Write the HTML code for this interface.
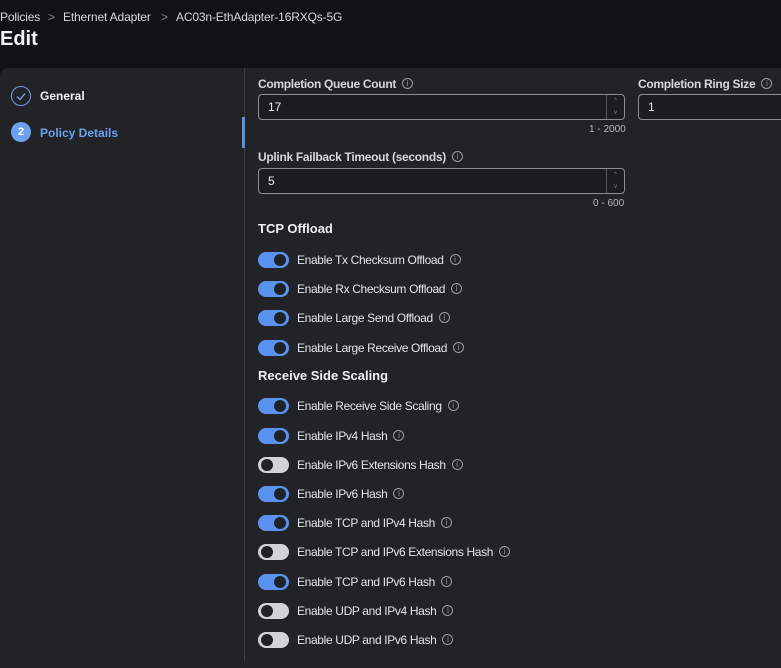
<!DOCTYPE html>
<html><head><style>
*{margin:0;padding:0;box-sizing:border-box}
body{width:781px;height:661px;background:#111214;font-family:"Liberation Sans",sans-serif;color:#e8e9eb;position:relative;overflow:hidden;font-size:12px}
.a{position:absolute;white-space:nowrap}
.crumb{top:10px;font-size:12px;color:#d8d9db;letter-spacing:-0.15px}
.panel{position:absolute;left:0;top:68px;width:781px;height:600px;background:#212327;border-radius:8px 0 0 0}
.lbl{font-size:12px;font-weight:bold;color:#d6d7d9;letter-spacing:-0.3px}
.i{display:inline-block;width:11px;height:11px;border:1px solid #9a9ca0;border-radius:50%;font-size:8px;line-height:9px;text-align:center;color:#9a9ca0;vertical-align:top;margin-top:1px;margin-left:6px;font-weight:normal;letter-spacing:0}
.inp{position:absolute;height:26px;border:1px solid #8d8f93;border-radius:4px;background:#1b1d20;padding-left:9px;line-height:24px;font-size:12px;color:#eee}
.spin{position:absolute;right:0;top:0;width:18px;height:24px;border-left:1px solid #55575b;font-size:6px;color:#888;text-align:center;line-height:12px}
.range{font-size:10px;color:#b8b9bc}
.h{font-size:13px;font-weight:bold;color:#eef0f2}
.tg{position:absolute;left:258px;width:31px;height:16px;border-radius:8px}
.on{background:#5a93ef}.off{background:#d2d3d5}
.tg:after{content:"";position:absolute;top:2px;width:12px;height:12px;border-radius:50%;background:#1f2226}
.on:after{right:3px}.off:after{left:3px}
.tl{left:297px;font-size:12px;color:#e4e5e7;letter-spacing:-0.35px}
</style></head><body>
<div class="a crumb" style="left:0">Policies</div>
<div class="a crumb" style="left:48px;color:#888">&gt;</div>
<div class="a crumb" style="left:63px">Ethernet Adapter</div>
<div class="a crumb" style="left:161px;color:#888">&gt;</div>
<div class="a crumb" style="left:176px">AC03n-EthAdapter-16RXQs-5G</div>
<div class="a" style="left:0;top:28px;font-size:20px;font-weight:bold;color:#f2f3f5">Edit</div>
<div class="panel"></div>
<div class="a" style="left:244px;top:68px;width:1px;height:593px;background:#3a3c40"></div>
<div class="a" style="left:242px;top:117px;width:3px;height:31px;background:#5a8ee0"></div>
<div class="a" style="left:11px;top:86px;width:20px;height:20px;border:1.5px solid #6d9de8;border-radius:50%"></div>
<svg class="a" style="left:11px;top:86px" width="20" height="20"><path d="M6 10.5l3 3 5-6" fill="none" stroke="#6d9de8" stroke-width="1.4"/></svg>
<div class="a" style="left:40px;top:89px;font-weight:bold;font-size:12px;color:#f0f0f2">General</div>
<div class="a" style="left:11px;top:122px;width:20px;height:20px;border-radius:50%;background:#6aa1f0;color:#fff;font-weight:bold;text-align:center;line-height:20px;font-size:11px">2</div>
<div class="a" style="left:40px;top:126px;font-weight:bold;font-size:12px;color:#6aa1f0">Policy Details</div>

<div class="a lbl" style="left:258px;top:77px">Completion Queue Count<span class="i">i</span></div>
<div class="inp" style="left:258px;top:94px;width:367px">17<div class="spin">^<br>v</div></div>
<div class="a range" style="left:589px;top:124px">1 - 2000</div>
<div class="a lbl" style="left:638px;top:77px">Completion Ring Size<span class="i">i</span></div>
<div class="inp" style="left:638px;top:94px;width:160px">1</div>
<div class="a lbl" style="left:258px;top:150px">Uplink Failback Timeout (seconds)<span class="i">i</span></div>
<div class="inp" style="left:258px;top:168px;width:367px">5<div class="spin">^<br>v</div></div>
<div class="a range" style="left:593px;top:198px">0 - 600</div>
<div class="a h" style="left:258px;top:221px">TCP Offload</div>
<div class="a h" style="left:258px;top:368px">Receive Side Scaling</div>

<div class="tg on" style="top:252px"></div><div class="a tl" style="top:253px">Enable Tx Checksum Offload<span class="i">i</span></div>
<div class="tg on" style="top:281px"></div><div class="a tl" style="top:282px">Enable Rx Checksum Offload<span class="i">i</span></div>
<div class="tg on" style="top:310px"></div><div class="a tl" style="top:311px">Enable Large Send Offload<span class="i">i</span></div>
<div class="tg on" style="top:340px"></div><div class="a tl" style="top:341px">Enable Large Receive Offload<span class="i">i</span></div>
<div class="tg on" style="top:398px"></div><div class="a tl" style="top:399px">Enable Receive Side Scaling<span class="i">i</span></div>
<div class="tg on" style="top:428px"></div><div class="a tl" style="top:429px">Enable IPv4 Hash<span class="i">i</span></div>
<div class="tg off" style="top:457px"></div><div class="a tl" style="top:458px">Enable IPv6 Extensions Hash<span class="i">i</span></div>
<div class="tg on" style="top:486px"></div><div class="a tl" style="top:487px">Enable IPv6 Hash<span class="i">i</span></div>
<div class="tg on" style="top:515px"></div><div class="a tl" style="top:516px">Enable TCP and IPv4 Hash<span class="i">i</span></div>
<div class="tg off" style="top:544px"></div><div class="a tl" style="top:545px">Enable TCP and IPv6 Extensions Hash<span class="i">i</span></div>
<div class="tg on" style="top:574px"></div><div class="a tl" style="top:575px">Enable TCP and IPv6 Hash<span class="i">i</span></div>
<div class="tg off" style="top:603px"></div><div class="a tl" style="top:604px">Enable UDP and IPv4 Hash<span class="i">i</span></div>
<div class="tg off" style="top:632px"></div><div class="a tl" style="top:633px">Enable UDP and IPv6 Hash<span class="i">i</span></div>
</body></html>
